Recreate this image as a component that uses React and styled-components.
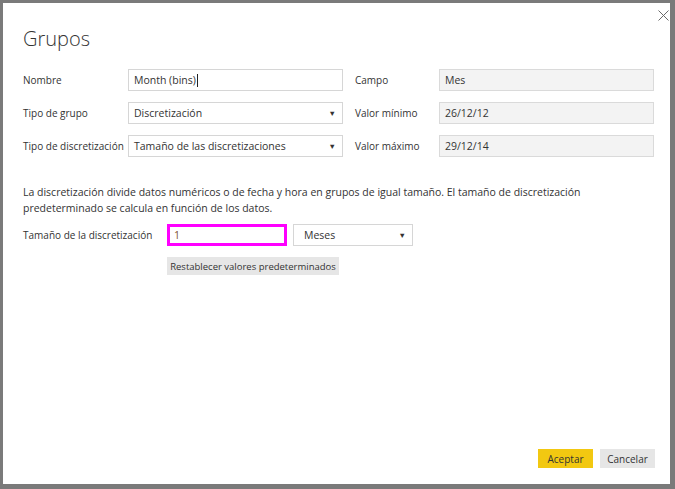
import styled, { createGlobalStyle } from 'styled-components';

const GlobalStyle = createGlobalStyle`
  html, body { margin: 0; padding: 0; background: #777; }
  body { font-family: "Open Sans", "Noto Sans", sans-serif; color: #333; }
  * { box-sizing: border-box; }
`;

const Frame = styled.div`
  width: 675px;
  height: 489px;
  background: #7a7a7a;
  padding: 3px 5px 5px 3px;
`;

const Dialog = styled.div`
  position: relative;
  height: 100%;
  background: #fff;
  padding: 22px 15px 15px 20px;
  display: flex;
  flex-direction: column;
`;

const Close = styled.div`
  position: absolute;
  top: 1px;
  right: 1px;
  width: 11px;
  height: 11px;
`;

const Title = styled.h1`
  margin: 0 0 16px 0;
  font-size: 20px;
  font-weight: 300;
  line-height: 28px;
  color: #333;
`;

const FormGrid = styled.div`
  display: grid;
  grid-template-columns: 105px 215px 96px 215px;
  row-gap: 11px;
  align-items: center;
`;

const Label = styled.div`
  font-size: 10px;
  color: #333;
  white-space: nowrap;
  padding-left: ${(p) => (p.$second ? '12px' : '0')};
`;

const Box = styled.div`
  height: 22px;
  border: 1px solid ${(p) => (p.$readonly ? '#dadada' : '#d6d6d6')};
  background: ${(p) => (p.$readonly ? '#f3f3f3' : '#fff')};
  display: flex;
  align-items: center;
  padding: 0 5px;
  font-size: 10.5px;
  color: #333;
  width: ${(p) => p.$width || 'auto'};
`;

const Caret = styled.span`
  display: inline-block;
  width: 1px;
  height: 13px;
  background: #222;
  margin-left: 1px;
`;

const Arrow = styled.span`
  margin-left: auto;
  font-size: 7.5px;
  color: #333;
  padding-right: 1px;
`;

const Description = styled.p`
  margin: 27px 0 0 0;
  font-size: 10.5px;
  line-height: 16px;
  color: #333;
`;

const SizeRow = styled.div`
  margin-top: 8px;
  display: flex;
  align-items: center;
`;

const SizeLabel = styled(Label)`
  width: 144px;
`;

const Highlight = styled.div`
  width: 120px;
  height: 22px;
  border: 3px solid #ff00ff;
  padding: 0 4px;
  display: flex;
  align-items: center;
  font-size: 10.5px;
  color: #7a5230;
`;

const MonthSelect = styled(Box)`
  margin-left: 6px;
  padding-left: 10px;
`;

const Secondary = styled.button`
  border: none;
  background: #e6e6e6;
  font-family: inherit;
  font-size: 9.5px;
  color: #333;
  height: 18px;
  width: ${(p) => p.$width || 'auto'};
  padding: 0;
  cursor: pointer;
`;

const ResetRow = styled.div`
  margin-top: 11px;
  padding-left: 144px;
  display: flex;
`;

const Footer = styled.div`
  margin-top: auto;
  display: flex;
  justify-content: flex-end;
  gap: 7px;
  padding-bottom: 1px;
`;

const FooterButton = styled(Secondary)`
  height: 19px;
  font-size: 10px;
  background: ${(p) => (p.$primary ? '#f2c811' : '#e6e6e6')};
`;

export default function App() {
  return (
    <>
      <GlobalStyle />
      <Frame>
        <Dialog>
          <Close>
            <svg width="11" height="11" viewBox="0 0 11 11">
              <path d="M0.5 0.5 L10.5 10.5 M10.5 0.5 L0.5 10.5" stroke="#6a6a6a" strokeWidth="1" />
            </svg>
          </Close>
          <Title>Grupos</Title>
          <FormGrid>
            <Label>Nombre</Label>
            <Box>Month (bins)<Caret /></Box>
            <Label $second>Campo</Label>
            <Box $readonly>Mes</Box>

            <Label>Tipo de grupo</Label>
            <Box>Discretización<Arrow>▼</Arrow></Box>
            <Label $second>Valor mínimo</Label>
            <Box $readonly>26/12/12</Box>

            <Label>Tipo de discretización</Label>
            <Box>Tamaño de las discretizaciones<Arrow>▼</Arrow></Box>
            <Label $second>Valor máximo</Label>
            <Box $readonly>29/12/14</Box>
          </FormGrid>
          <Description>
            La discretización divide datos numéricos o de fecha y hora en grupos de igual tamaño. El tamaño de discretización
            <br />
            predeterminado se calcula en función de los datos.
          </Description>
          <SizeRow>
            <SizeLabel>Tamaño de la discretización</SizeLabel>
            <Highlight>1</Highlight>
            <MonthSelect $width="120px">Meses<Arrow>▼</Arrow></MonthSelect>
          </SizeRow>
          <ResetRow>
            <Secondary $width="172px">Restablecer valores predeterminados</Secondary>
          </ResetRow>
          <Footer>
            <FooterButton $primary $width="55px">Aceptar</FooterButton>
            <FooterButton $width="55px">Cancelar</FooterButton>
          </Footer>
        </Dialog>
      </Frame>
    </>
  );
}
